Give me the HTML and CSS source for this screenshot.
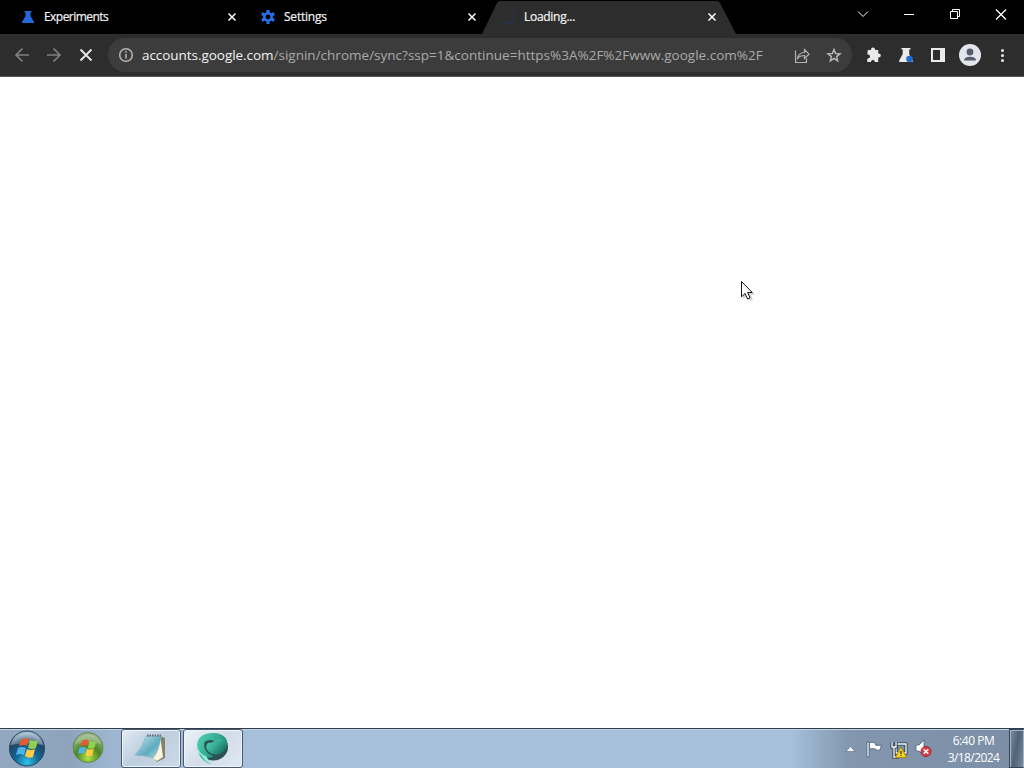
FILE: index.html
```html
<!DOCTYPE html>
<html lang="en">
<head>
<meta charset="utf-8">
<title>Loading...</title>
<link rel="stylesheet" href="styles.css">
</head>
<body>
<div class="desktop">
  <header class="tabstrip">
    <div class="tab">
      <svg class="fav" viewBox="0 0 14 14"><path d="M3.500 1h7v1.500H9.500V6L13 12q.5 1-.5 1h-11q-1 0-.5-1L4.500 6V2.500h-1z" fill="#2268d8"/></svg>
      <span class="title t1">Experiments</span>
      <svg class="close" viewBox="0 0 10 10"><path d="M1.500 1.500l7 7m0-7l-7 7"/></svg>
    </div>
    <div class="tab">
      <svg class="fav" viewBox="0 0 14 14"><g stroke="#2570e8" fill="none"><circle cx="7" cy="7" r="3.700" stroke-width="2.600"/><path stroke-width="3.200" d="M7 0v2.600M7 11.400V14M.9 3.500l2.300 1.300M10.800 9.200l2.300 1.300M.9 10.500l2.300-1.300M10.800 4.800l2.300-1.300"/></g></svg>
      <span class="title t2">Settings</span>
      <svg class="close" viewBox="0 0 10 10"><path d="M1.500 1.500l7 7m0-7l-7 7"/></svg>
    </div>
    <div class="tab active">
      <svg class="shape" viewBox="0 0 254 34"><path d="M0 34 15 3Q16 1 18 1H235Q237 1 238 3L254 34z" fill="#2d2d2d"/></svg>
      <svg class="fav" viewBox="0 0 14 14"><path d="M13 1v7q0 4-5 5H2" fill="none" stroke="#28364f" stroke-width="1.500"/></svg>
      <span class="title t3">Loading...</span>
      <svg class="close" viewBox="0 0 10 10"><path d="M1.500 1.500l7 7m0-7l-7 7"/></svg>
    </div>
    <svg class="winbtns" viewBox="0 0 184 34" fill="none" stroke="#fff"><path d="M18 11.500l5 5 5-5M64 14.500h10M110.500 11.500h7v7h-7zM112.500 11.500v-2h7v7h-2"/><path stroke-width="1.300" d="M156 9.500l10 10m0-10l-10 10"/></svg>
  </header>
  <nav class="toolbar">
    <svg class="navicons" viewBox="0 0 108 42" fill="none"><path d="M29 21H16m6.500-6.500L16 21l6.500 6.500M47 21h13m-6.500-6.500L60 21l-6.500 6.500" stroke="#808080" stroke-width="1.700"/><path d="M80.500 15.500l11 11m0-11l-11 11" stroke="#e6e6e6" stroke-width="1.900"/></svg>
    <div class="omnibox">
      <svg class="info" viewBox="0 0 16 16" fill="none" stroke="#b5b5b5" stroke-width="1.500"><circle cx="8" cy="8" r="6.300"/><path d="M8 7v4.500M8 4v1.700"/></svg>
      <div class="url"><span class="host">accounts.google.com</span><span class="path">/signin/chrome/sync?ssp=1&amp;continue=https%3A%2F%2Fwww.google.com%2F</span></div>
      <svg class="actions" viewBox="0 0 60 34" fill="none" stroke="#b4b4b4" stroke-width="1.200"><path d="M3.500 12.500v12h11v-4M5.500 20.500q1-6 7-6v-3l4.500 4.700-4.500 4.300v-3q-4.500 0-7 3z"/><path stroke-width="1.500" d="M42 11.500l1.600 4 4.400.3-3.400 2.800 1.100 4.200-3.700-2.300-3.700 2.300 1.100-4.200-3.400-2.800 4.400-.3z"/></svg>
    </div>
    <svg class="tools" viewBox="0 0 172 42" fill="#eaeaea">
      <path d="M15.800 16H19v-.6a2 2 0 0 1 4 0v.6h3.200v3.500h.6a2 2 0 0 1 0 4h-.6V28h-3.400v-.6a2 2 0 0 0-3.800 0v.6h-3.700v-3.600h.7a2 2 0 0 0 0-4h-.7z"/>
      <path d="M49.500 14h9v1.500h-1.300V20l3.500 7q.5 1-.7 1H48q-1.500 0-.8-1.500l3.500-6.500v-4.500h-1.200z"/><circle cx="57.500" cy="25" r="3.300" fill="#2469cf"/>
      <path fill-rule="evenodd" d="M79 14h14v14H79zm2 2v10h7V16z"/>
      <circle cx="118" cy="21" r="11" fill="#e2e5eb"/><g fill="#555c6c"><circle cx="118" cy="18" r="3.400"/><path d="M112 26.500q0-3.800 6-3.800t6 3.800z"/></g>
      <circle cx="150.500" cy="16.500" r="1.500"/><circle cx="150.500" cy="21.500" r="1.500"/><circle cx="150.500" cy="26.500" r="1.500"/>
    </svg>
  </nav>
  <main class="page"></main>
  <svg class="cursor" viewBox="0 0 16 22"><path d="M3 3v16l4-3 3 5 3-1-2-5h4z" fill="#777" opacity=".3"/><path d="M1.500 1.500v15.300l3.600-3.300 2.500 5.500 2.500-1.100-2.500-5.400h4.700z" fill="#fff" stroke="#111"/></svg>
  <footer class="taskbar">
    <svg class="orbs" viewBox="0 0 121 39">
      <defs>
        <radialGradient id="blue" cx=".5" cy=".9" r=".85"><stop offset="0" stop-color="#31c4ed"/><stop offset=".4" stop-color="#126796"/><stop offset=".75" stop-color="#204767"/><stop offset="1" stop-color="#9db9ce"/></radialGradient>
        <radialGradient id="green" cx=".5" cy=".85" r=".8"><stop offset="0" stop-color="#b0e545"/><stop offset=".5" stop-color="#4d8526"/><stop offset="1" stop-color="#9cba8c"/></radialGradient>
        <g id="flag"><path d="M-6-7q4-3 8-1l-2 7q-3-2-8 0z" fill="#e9592f"/><path d="M3-7q4 2 8 0L9 1Q5 3 1 1z" fill="#91cf4e"/><path d="M-9 1q4-2 8 0l-2 7q-4-2-8 0z" fill="#4fb3ea"/><path d="M0 2q4 2 8 0L6 10q-4 2-8-1z" fill="#ffcc42"/></g>
      </defs>
      <circle cx="27" cy="19.500" r="17.500" fill="url(#blue)" stroke="#29465f"/><path d="M11 16a16.500 16 0 0 1 32 0q-15-4-32 0z" fill="#fff" opacity=".3"/><use href="#flag" x="27" y="18"/>
      <circle cx="88" cy="18.500" r="15" fill="url(#green)" stroke="#608653"/><path d="M75 15a13.500 13 0 0 1 26 0q-12-3-26 0z" fill="#fff" opacity=".2"/><use href="#flag" transform="translate(87 18) scale(.85)"/>
    </svg>
    <div class="task">
      <svg viewBox="0 0 58 38"><defs><linearGradient id="note" x2="1" y2="1"><stop stop-color="#d0e8ee"/><stop offset=".6" stop-color="#5dabc0"/><stop offset="1" stop-color="#b6dce1"/></linearGradient></defs><path d="M38 6l5 2v20l-8 4-2-2z" fill="#85816d"/><path d="M38.500 8l2.500 19-6 4-4-3z" fill="#f7f5dc"/><path d="M24 6h15q-2 16-8 22-9-3-18-3 7-7 11-19z" fill="url(#note)" stroke="#87b2bb" stroke-width=".6"/><path d="M25 5.500h14" stroke="#5e6d74" stroke-width="2" stroke-dasharray="1.500 1"/></svg>
    </div>
    <div class="task">
      <svg viewBox="0 0 58 38"><defs><linearGradient id="teal" x2="1" y2=".7"><stop stop-color="#54d8b7"/><stop offset=".5" stop-color="#35ad94"/><stop offset="1" stop-color="#176c63"/></linearGradient></defs><ellipse cx="29.500" cy="17" rx="14.500" ry="13.500" fill="#2b5152"/><path d="M13 15Q14 3 29 3q12 0 14.500 9-3 0-4-1-4-3-8 1-5-4-11 0-2 10 9 14-3 3-7 1l4 7Q14 30 13 15z" fill="url(#teal)"/><path d="M24 13q5 0 8-3 5-4 11 1 1 9-7 13-8 2-13-4-2-4 1-7z" fill="url(#teal)"/><path d="M13 16q3 9 9 10l5 8q-7-3-9-8-5-3-5-10z" fill="#98efd8"/></svg>
    </div>
    <div class="tray">
      <svg class="trayicons" viewBox="0 0 100 39"><path d="M11 22.500l4.500-5 4.500 5z" fill="#fff" stroke="#53677e" stroke-width=".6"/><path d="M32 13h2v15h-2z" fill="#fff" stroke="#384d66" stroke-width=".7"/><path d="M34.500 13.500q4-1 6 1v1.500q3 1 6 0l-1.500 5q-3 1-5-1-2-1-5.500 0z" fill="#fff" stroke="#465d75" stroke-width=".8"/>
      <path d="M61 15h10v9H61z" fill="#738cac" stroke="#26384b" stroke-width="3"/><path d="M61 15h10v9H61z" fill="none" stroke="#fff" stroke-width="1.300"/><path d="M57 13v5h4v-5m-2 5v10h5" fill="none" stroke="#243447" stroke-width="3"/><path d="M57 13v5h4v-5m-2 5v10h5" fill="none" stroke="#fff" stroke-width="1.300"/><path d="M66 18l5.500 10.500h-11z" fill="#f9d72e" stroke="#ad8a08"/><path d="M66 22v3m0 1v1" stroke="#302b12" stroke-width="1.300"/>
      <path d="M81 16h3l5-5v16l-5-5h-3z" fill="#fff" stroke="#506274" stroke-width=".8"/><circle cx="91" cy="22.500" r="5" fill="#d53e43" stroke="#a82330"/><path d="M88.700 20.200l4.600 4.600m0-4.600l-4.600 4.600" stroke="#fff" stroke-width="1.500"/></svg>
      <div class="clock"><span class="time">6:40 PM</span><span class="date">3/18/2024</span></div>
      <div class="peek"></div>
    </div>
  </footer>
</div>
</body>
</html>
```
FILE: styles.css
```css
* { box-sizing: border-box; }
body { margin: 0; font-family: "Open Sans", "Noto Sans", sans-serif; overflow: hidden; }
svg { display: block; flex: none; }
.desktop { width: 1024px; height: 768px; display: flex; flex-direction: column; position: relative; background: #fff; }
.tabstrip { height: 34px; display: flex; background: #000; color: #f3f3f3; }
.tab { position: relative; width: 240px; height: 34px; display: flex; align-items: center; padding: 0 3px 0 21px; }
.fav { width: 14px; height: 14px; position: relative; }
.title { position: relative; margin-left: 9px; font-size: 12px; line-height: 16px; white-space: nowrap; -webkit-text-stroke: .2px; }
.t1 { letter-spacing: -.55px; }
.t2 { letter-spacing: -.22px; }
.t3 { letter-spacing: -.28px; }
.close { position: relative; width: 10px; height: 10px; margin-left: auto; stroke: #fff; stroke-width: 1.5; }
.shape { position: absolute; left: 2px; top: 0; width: 254px; height: 34px; }
.winbtns { width: 184px; height: 34px; margin-left: auto; }
.toolbar { height: 43px; display: flex; align-items: flex-start; background: #2d2d2d; border-bottom: 1px solid #555; }
.navicons { width: 108px; height: 42px; }
.omnibox { width: 744px; height: 34px; margin-top: 4px; display: flex; align-items: center; background: #3c3c3c; border-radius: 17px; padding-left: 10px; }
.info { width: 16px; height: 16px; }
.url { margin-left: 8px; width: 640px; font-size: 13.5px; line-height: 20px; white-space: nowrap; }
.host { color: #f2f2f2; letter-spacing: -.05px; }
.path { color: #aaa; letter-spacing: .01px; }
.actions { width: 60px; height: 34px; margin-left: auto; }
.tools { width: 172px; height: 42px; }
.page { flex: 1; background: #fff; }
.cursor { position: absolute; left: 740px; top: 280px; width: 16px; height: 22px; }
.taskbar { height: 40px; display: flex; border-top: 1px solid #303e4c; box-shadow: inset 0 1px #c2d4e5; background: linear-gradient(90deg, #91a8c0 0, #8fa4bc 70px, #9db5d0 110px, #a7c0dc 260px, #a7c0dc 790px, #8296ae 850px, #7b8ea6 1024px); }
.orbs { width: 121px; height: 39px; }
.task { width: 60px; height: 39px; margin-right: 2px; border: 1px solid #46586d; border-radius: 3px; background: linear-gradient(135deg, #e1eaf4, #bdcede 45%, #cbd9e8); box-shadow: inset 0 0 0 1px #eef4fa; }
.task + .task { background: linear-gradient(135deg, #edf2f8, #d2dde9 50%, #dfe8f2); }
.task svg { width: 58px; height: 38px; }
.tray { margin-left: auto; display: flex; }
.trayicons { width: 100px; height: 39px; }
.clock { width: 74px; height: 39px; display: flex; flex-direction: column; align-items: center; padding: 3px 0 0 3px; color: #fff; font-size: 12px; line-height: 17px; white-space: nowrap; }
.time { letter-spacing: -.45px; }
.date { letter-spacing: -.6px; }
.peek { width: 15px; height: 39px; border: 1px solid #35465a; border-right-color: #a4b3c2; box-shadow: inset 1px 1px #a4b5c7; background: linear-gradient(100deg, #7f8fa2, #4f6277 50%, #7b8b9d); }
```
